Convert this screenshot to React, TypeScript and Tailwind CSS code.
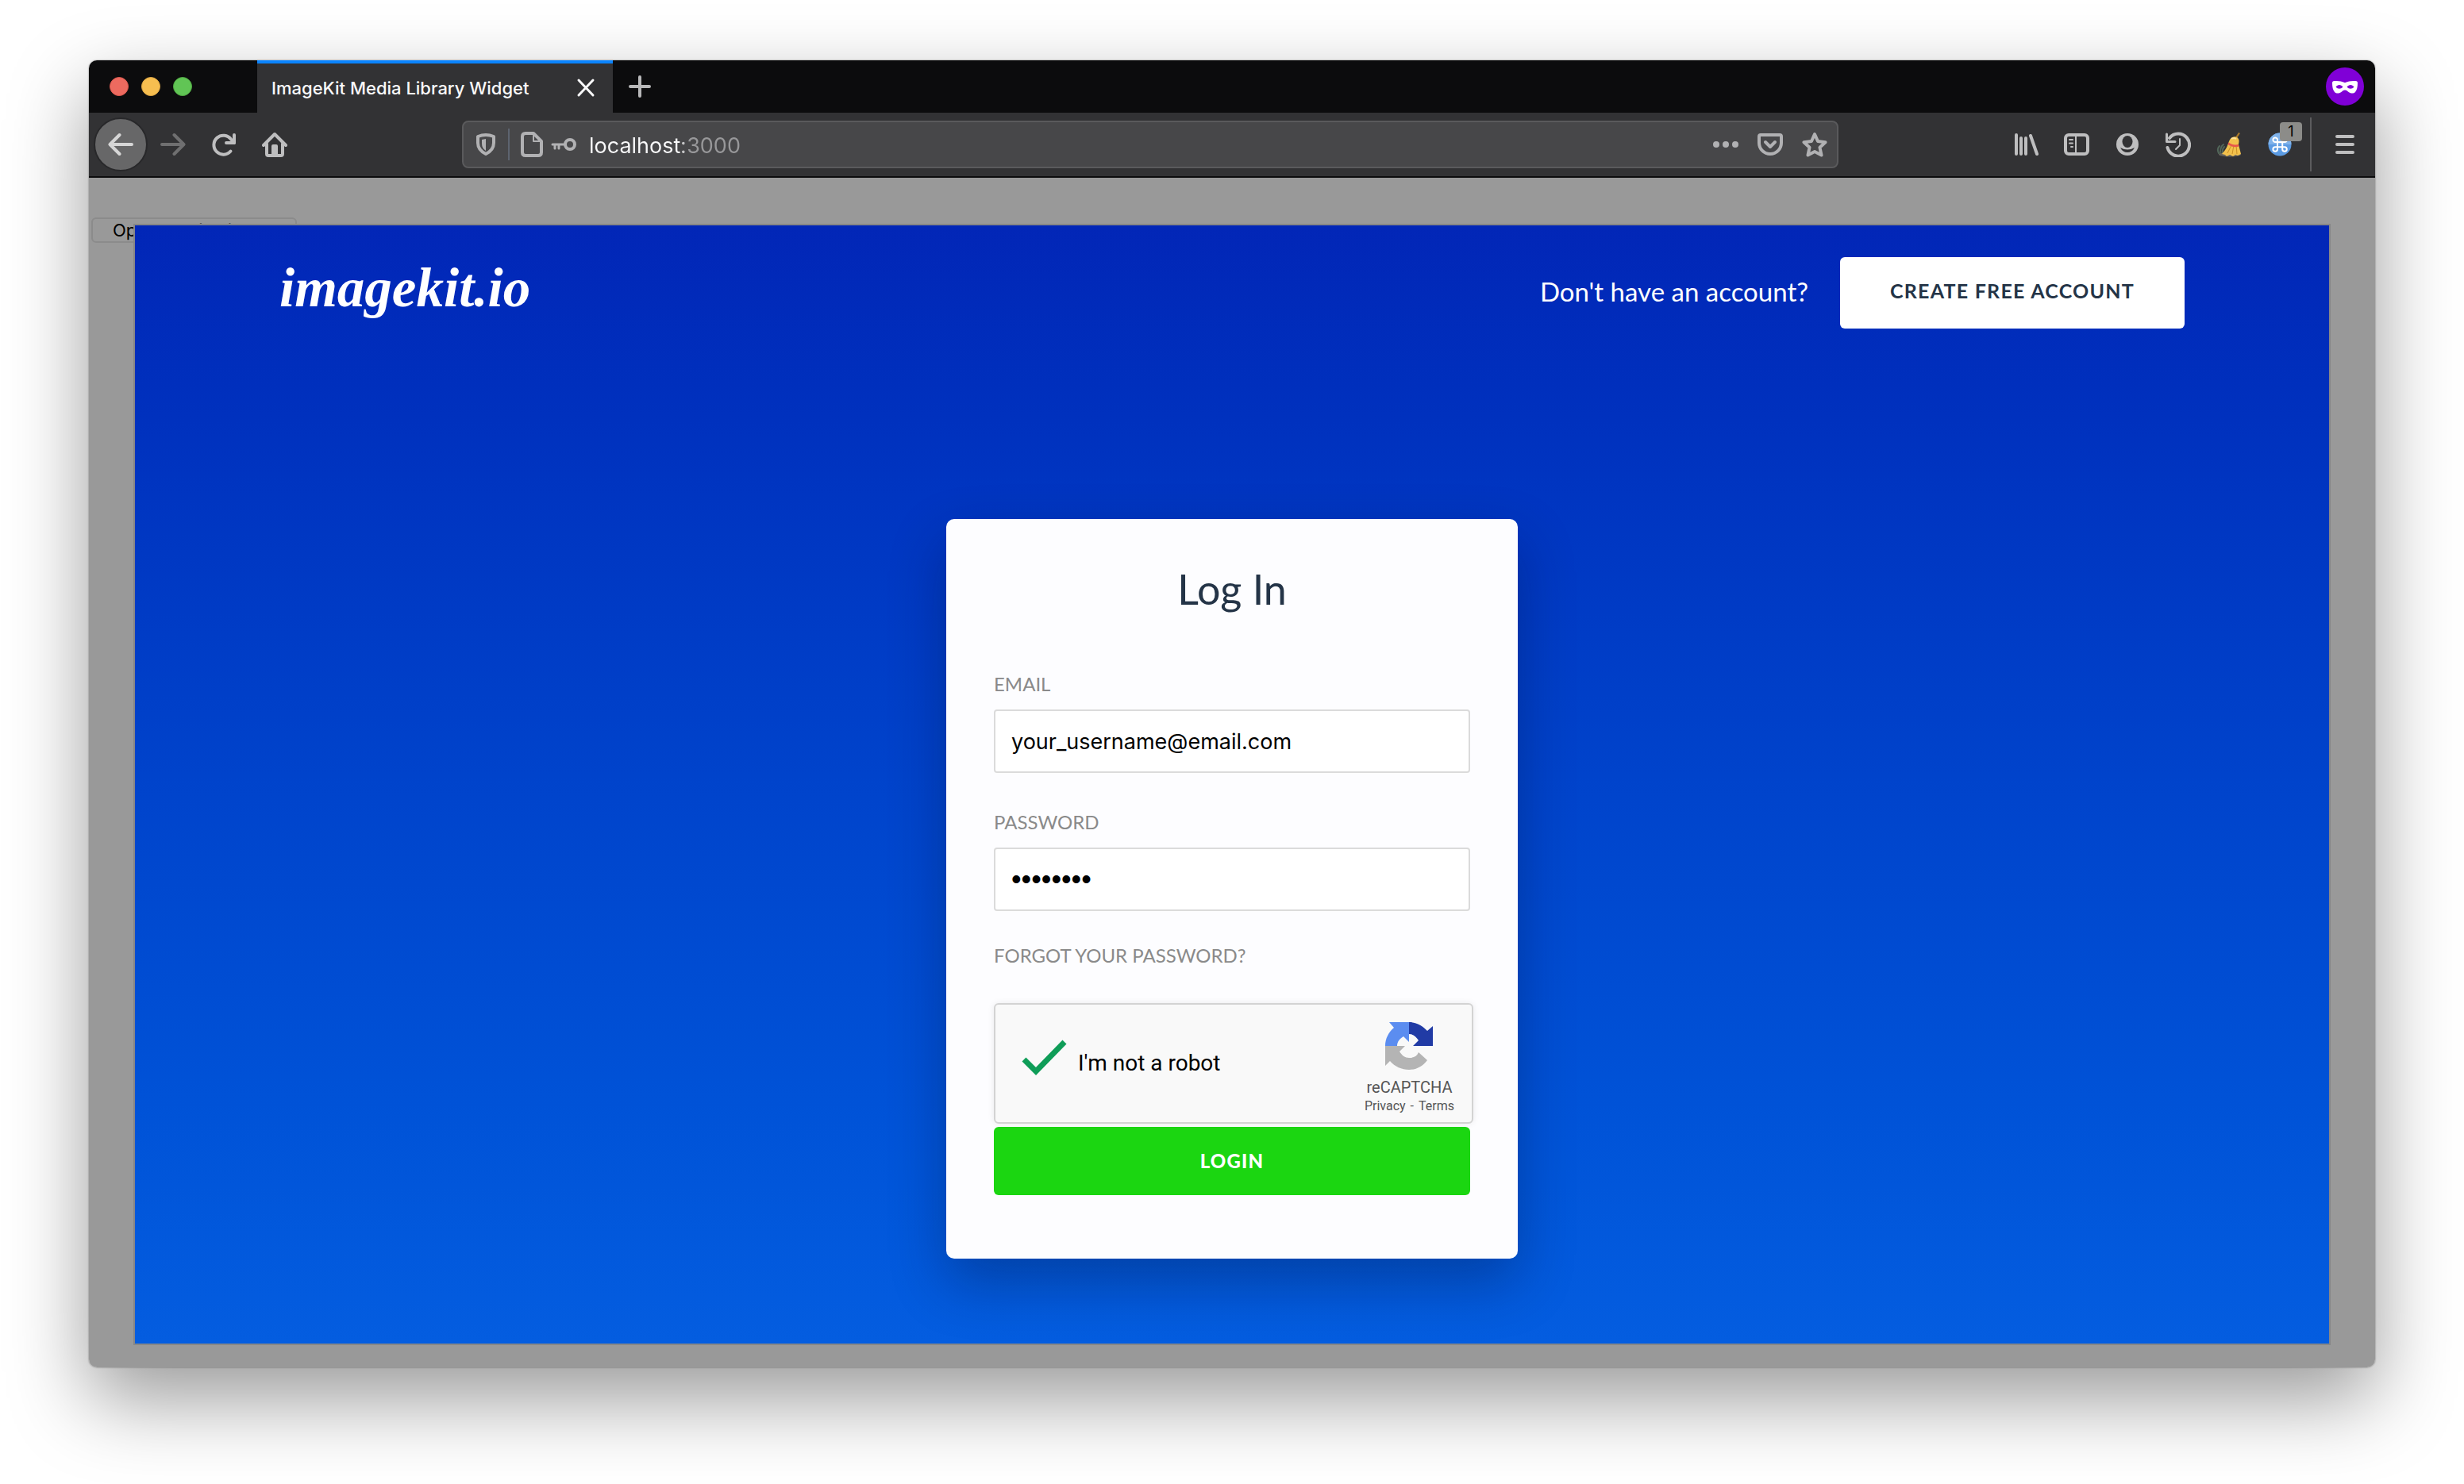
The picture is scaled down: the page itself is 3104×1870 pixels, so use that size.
import type { ReactNode } from "react";

type IconProps = { children: ReactNode; className?: string; weight?: number };

function Icon({ children, className = "", weight = 4 }: IconProps) {
  return (
    <svg
      viewBox="0 0 32 32"
      aria-hidden="true"
      fill="none"
      stroke="currentColor"
      strokeWidth={weight}
      strokeLinecap="round"
      strokeLinejoin="round"
      className={`size-8 shrink-0 ${className}`}
    >
      {children}
    </svg>
  );
}

function ToolButton({ label, children }: { label: string; children: ReactNode }) {
  return (
    <button type="button" aria-label={label} className="flex size-8 shrink-0 items-center justify-center">
      {children}
    </button>
  );
}

function TabBar() {
  return (
    <div className="flex h-[66px] items-stretch rounded-t-[10px] bg-[#0c0c0d]">
      <div className="flex w-[212px] shrink-0 items-center gap-4 pl-[26px]">
        <button type="button" aria-label="Close window" className="size-6 rounded-full border border-[#d9574d] bg-[#ed6a5f]" />
        <button type="button" aria-label="Minimize window" className="size-6 rounded-full border border-[#dba442] bg-[#f6be50]" />
        <button type="button" aria-label="Zoom window" className="size-6 rounded-full border border-[#50a842] bg-[#61c555]" />
      </div>
      <div className="flex w-[448px] shrink-0 items-center justify-between border-t-4 border-[#0a84ff] bg-[#323234] pr-5 pl-[18px]">
        <span className="text-[22px] leading-8 font-medium text-[#f9f9fa]">ImageKit Media Library Widget</span>
        <button type="button" aria-label="Close tab" className="flex size-7 items-center justify-center text-[#f9f9fa]">
          <Icon weight={3}>
            <path d="M7 6l18 19M25 6L7 25" />
          </Icon>
        </button>
      </div>
      <button type="button" aria-label="New tab" className="ml-[18px] flex w-8 items-center justify-center text-[#b8b8b9]">
        <Icon>
          <path d="M16 4v24M4 16h24" />
        </Icon>
      </button>
      <div className="ml-auto flex items-center pr-[14px]">
        <svg viewBox="0 0 48 48" aria-label="Private browsing" role="img" className="size-12">
          <circle cx="24" cy="24" r="24" fill="#8000d7" />
          <path
            fill="#fff"
            fillRule="evenodd"
            d="M8 19.500c0-1.500.8-2.500 2.500-2.500 5-.4 9 .2 13.500 2.200 4.500-2 8.500-2.600 13.500-2.200 1.700 0 2.500 1 2.500 2.500 0 5-.8 9-3 11.500-2.400 2.400-5.600 1.800-8 .2-2-1.400-3-2.700-5-2.700s-3 1.300-5 2.700c-2.400 1.600-5.600 2.200-8-.2-2.200-2.500-3-6.500-3-11.500zM12.500 24.500c2.400-3.400 6.500-3.400 9 0-2.500 3-6.600 3-9 0zm14 0c2.500-3.400 6.600-3.400 9 0-2.400 3-6.500 3-9 0z"
          />
        </svg>
      </div>
    </div>
  );
}

function AddressBar() {
  return (
    <div className="flex h-[60px] w-[1734px] shrink items-center rounded-lg border-2 border-[#5a5a5c] bg-[#474749] px-3 text-[#b1b1b3]">
      <button type="button" aria-label="Tracking protection">
        <Icon>
          <path d="M6 6q10-4 20 0v8q0 9-10 14Q6 23 6 14z" />
          <path d="M16 9l-5 1v5q0 6 5 9z" fill="currentColor" stroke="none" />
        </Icon>
      </button>
      <span className="mx-3 h-10 w-0.5 bg-[#5d6470]" />
      <button type="button" aria-label="Site information">
        <Icon>
          <path d="M8 2h10l10 10v14q0 4-4 4H8q-4 0-4-4V6q0-4 4-4z" />
          <path d="M18 3v9h9" strokeWidth="2" />
        </Icon>
      </button>
      <button type="button" aria-label="Saved login" className="ml-2">
        <Icon>
          <circle cx="24" cy="16" r="6" />
          <path d="M18 16H2M5 16v5M10 16v5" strokeWidth="3" />
        </Icon>
      </button>
      <input
        type="text"
        aria-label="Address"
        defaultValue="localhost:3000"
        className="ml-4 min-w-0 flex-1 bg-[linear-gradient(90deg,#f9f9fa_119px,#98989a_119px)] bg-clip-text pt-1 text-[27px] leading-10 text-transparent caret-white outline-none"
      />
      <div className="flex items-center gap-6">
        <ToolButton label="Page actions">
          <Icon>
            <g stroke="none" fill="currentColor">
              <circle cx="4" cy="16" r="4" />
              <circle cx="16" cy="16" r="4" />
              <circle cx="28" cy="16" r="4" />
            </g>
          </Icon>
        </ToolButton>
        <ToolButton label="Save to Pocket">
          <Icon>
            <path d="M4 4h24q2 0 2 2v8a14 14 0 0 1-28 0V6q0-2 2-2z" />
            <path d="M10 13l6 6 6-6" />
          </Icon>
        </ToolButton>
        <ToolButton label="Bookmark this page">
          <Icon>
            <path d="M16 3l4 9 9.500 1.200-7 6.600L24.500 29.500 16 25l-8.500 4.500 2-9.700-7-6.600L12 12z" />
          </Icon>
        </ToolButton>
      </div>
    </div>
  );
}

function Broom() {
  return (
    <svg viewBox="0 0 32 32" aria-hidden="true" className="size-8">
      <ellipse cx="17" cy="28.500" rx="14" ry="3" fill="#66645f" />
      <path d="M3 27c-2-4-1-7 1-9M5 26c0-5 1-8 4-10M8 27c-1-4 0-6 2-8" stroke="#52675a" strokeWidth="2" fill="none" strokeLinecap="round" />
      <path d="M24 7l4-6 2 1-4 6z" fill="#a8782b" />
      <path d="M16 12c2-5 6-7 10-5 3 2 3 5 2 9l3 12-4 2-3-1-3 2-4-2-4 2-2-2-4-1c5-5 7-10 9-16z" fill="#f2c14c" />
      <path d="M19 17l-5 10M22 17l-2 11M25 17l1 11" stroke="#c98f25" fill="none" />
      <path d="M15.500 13.500c4 3 8 3.500 12.500 2.500l.4 2.500c-5 1.500-10 .5-14-2.500z" fill="#e8574b" />
      <path d="M19 9q3-2 6 0" stroke="#ffe29a" strokeWidth="2" fill="none" />
    </svg>
  );
}

function Toolbar() {
  return (
    <div className="flex h-[82px] items-center border-b-2 border-[#0c0c0d] bg-[#323234] pr-[22px] pl-1.5 text-[#bebebf]">
      <div className="flex w-[464px] shrink items-center gap-8">
        <button
          type="button"
          aria-label="Back"
          className="flex size-[68px] shrink-0 items-center justify-center rounded-full border-2 border-[#28282a] bg-[#676768] text-[#d6d6d6]"
        >
          <Icon>
            <path d="M14.500 4L2.500 16l12 12M3 16h27" />
          </Icon>
        </button>
        <div className="-ml-4 text-[#6f6f70]">
          <ToolButton label="Forward">
            <Icon>
              <path d="M17.500 4l12 12-12 12M29 16H2" />
            </Icon>
          </ToolButton>
        </div>
        <ToolButton label="Reload">
          <Icon>
            <path d="M24.500 24.500A12 12 0 1 1 25 9.500L29 14" />
            <path d="M29 4v10H19" />
          </Icon>
        </ToolButton>
        <ToolButton label="Home">
          <Icon>
            <path d="M2 17L16 3l14 14M6 15v13q0 2 2 2h16q2 0 2-2V15" />
            <path d="M14 29V18h4v11" />
          </Icon>
        </ToolButton>
      </div>
      <AddressBar />
      <div className="ml-auto flex items-center gap-8">
        <ToolButton label="Library">
          <Icon>
            <path d="M4 4v24M10 8v20M16 8v20M22 5l8 23" />
          </Icon>
        </ToolButton>
        <ToolButton label="Sidebars">
          <Icon>
            <rect x="2" y="4" width="28" height="24" rx="4" />
            <path d="M15 4v24M7 10h4M7 14.500h4M9 19h2" strokeWidth="2" />
          </Icon>
        </ToolButton>
        <ToolButton label="Account">
          <Icon>
            <circle cx="16" cy="16" r="14" fill="currentColor" stroke="none" />
            <g fill="#323234" stroke="none">
              <ellipse cx="16" cy="12.500" rx="6.500" ry="7.500" />
              <path d="M7 20q9 5 18 0-3 6-9 6t-9-6z" />
            </g>
          </Icon>
        </ToolButton>
        <ToolButton label="History">
          <Icon>
            <path d="M2.500 20A14 14 0 1 0 5 8" />
            <path d="M1.500 3v9.500H12" strokeWidth="3" />
            <path d="M18 9v8l-5 5" strokeWidth="2" />
          </Icon>
        </ToolButton>
        <ToolButton label="Clean up">
          <Broom />
        </ToolButton>
        <button type="button" aria-label="Extension, 1 notification" className="relative size-8 shrink-0">
          <svg viewBox="0 0 32 32" aria-hidden="true" className="size-8">
            <circle cx="16" cy="16" r="14.500" fill="#5b9be3" />
            <path d="M1.500 16a14.500 14.500 0 0 1 29 0z" fill="#7fb2ea" />
            <path
              d="M13 13V10.500A2.800 2.800 0 1 0 10.200 13H22a2.800 2.800 0 1 0-2.800-2.800V22A2.800 2.800 0 1 0 22 19.200H10.200A2.800 2.800 0 1 0 13 22z"
              fill="none"
              stroke="#fff"
              strokeWidth="2"
            />
          </svg>
          <span className="absolute -top-3 left-4 flex h-6 w-7 items-center justify-center rounded-sm bg-[#8c8c89] text-lg leading-6 text-black">
            1
          </span>
        </button>
        <span className="-mr-1.5 -ml-2.5 h-[68px] w-0.5 bg-[#5c5c5e]" />
        <ToolButton label="Open menu">
          <Icon>
            <path d="M6 6h20M6 16h20M6 26h20" />
          </Icon>
        </ToolButton>
      </div>
    </div>
  );
}

function RecaptchaLogo() {
  return (
    <svg viewBox="0 0 60 60" aria-hidden="true" className="size-[60px]">
      <path d="M60 5v25H35l7-7c-3-5-7-8-12-8V0c9 0 17 4 23 11z" fill="#213ba5" />
      <path d="M5 0h25v25l-7-7c-5 3-8 7-8 12H0c0-9 4-17 11-23z" fill="#5b8df0" />
      <path d="M0 55V30h25l-7 7c3 5 7 8 12 8 6 0 10-2 12-7l11 10c-6 8-14 12-23 12S12 56 6 49z" fill="#b4b4b4" />
    </svg>
  );
}

const labelText = "font-['Lato',sans-serif] text-2xl leading-8 text-[#8a8a8a]";
const fieldBox = "mt-4 h-20 w-full rounded border-2 border-[#dbdbdb] bg-white px-5 text-black outline-none";

function LoginCard() {
  return (
    <form
      onSubmit={(event) => event.preventDefault()}
      className="mx-auto mt-60 mb-[106px] flex w-[720px] flex-col rounded-[10px] bg-[#fdfdff] px-15 pt-14 pb-20 shadow-[0_30px_70px_rgba(0,10,40,0.3)]"
    >
      <h1 className="text-center font-['Lato',sans-serif] text-[52px] leading-16 text-[#243447]">Log In</h1>

      <label htmlFor="email" className={`mt-18 ${labelText}`}>
        EMAIL
      </label>
      <input id="email" type="email" defaultValue="your_username@email.com" className={`text-[27px] ${fieldBox}`} />

      <label htmlFor="password" className={`mt-[46px] ${labelText}`}>
        PASSWORD
      </label>
      <input
        id="password"
        type="password"
        defaultValue="12345678"
        className={`font-['Liberation_Sans',sans-serif] text-4xl ${fieldBox}`}
      />

      <a href="#forgot" className={`mt-10 self-start ${labelText}`}>
        FORGOT YOUR PASSWORD?
      </a>

      <div className="-mr-1 mt-11 flex h-[152px] rounded-md border-2 border-[#d3d3d3] bg-[#f9f9f9] font-['Roboto',sans-serif] shadow-[0_0_8px_rgba(0,0,0,0.08)]">
        <div className="flex flex-1 items-center pl-8">
          <span className="grid size-[60px] place-items-center">
            <input id="robot" type="checkbox" defaultChecked className="peer col-start-1 row-start-1 size-14 appearance-none" />
            <svg
              viewBox="0 0 60 60"
              aria-hidden="true"
              className="pointer-events-none invisible col-start-1 row-start-1 size-[60px] peer-checked:visible"
            >
              <path d="M4 25l15 15L55 3" fill="none" stroke="#0f9d58" strokeWidth="7" />
            </svg>
          </span>
          <label htmlFor="robot" className="ml-3 text-[28px] leading-10 text-black">
            I'm not a robot
          </label>
        </div>
        <div className="mr-[22px] flex flex-col items-center pt-[22px] text-[#555]">
          <RecaptchaLogo />
          <span className="mt-2 text-xl leading-7">reCAPTCHA</span>
          <span className="flex gap-1.5 text-base leading-5">
            <a href="#privacy">Privacy</a>
            <span>-</span>
            <a href="#terms">Terms</a>
          </span>
        </div>
      </div>

      <button
        type="submit"
        className="mt-1 h-[86px] rounded-md bg-[#1bd611] font-['Lato',sans-serif] text-2xl font-black tracking-wider text-white"
      >
        LOGIN
      </button>
    </form>
  );
}

function Widget() {
  return (
    <section
      aria-label="ImageKit login"
      className="z-10 col-start-1 row-start-1 mx-14 mt-[58px] mb-7 border-2 border-[#878787] bg-linear-to-b from-[#0226b7] to-[#045de0]"
    >
      <header className="flex items-start justify-between px-[182px] pt-10">
        <a href="#home" className="font-['Liberation_Serif',serif] text-[69px] leading-[78px] font-bold text-white italic">
          imagekit.io
        </a>
        <div className="flex items-center gap-10 font-['Lato',sans-serif]">
          <span className="pb-1 text-[33px] leading-10 text-white">Don't have an account?</span>
          <button type="button" className="h-[90px] w-[434px] rounded-md bg-white pb-1 text-[25px] font-bold tracking-wider text-[#243447]">
            CREATE FREE ACCOUNT
          </button>
        </div>
      </header>
      <LoginCard />
    </section>
  );
}

export default function App() {
  return (
    <div className="flex min-h-screen flex-col bg-white px-28 pt-[76px] pb-[147px] font-['Inter',sans-serif]">
      <div className="flex flex-1 flex-col rounded-[10px] shadow-[0_40px_100px_rgba(0,0,0,0.4),0_0_2px_rgba(0,0,0,0.5)]">
        <TabBar />
        <Toolbar />
        <main className="grid flex-1 rounded-b-[10px] bg-[#999]">
          <button
            type="button"
            className="col-start-1 row-start-1 mt-[50px] ml-[3px] h-8 w-[259px] self-start rounded-md border-2 border-[#8b8b8b] text-[22px] leading-6 text-black"
          >
            Open Media Library
          </button>
          <Widget />
        </main>
      </div>
    </div>
  );
}
